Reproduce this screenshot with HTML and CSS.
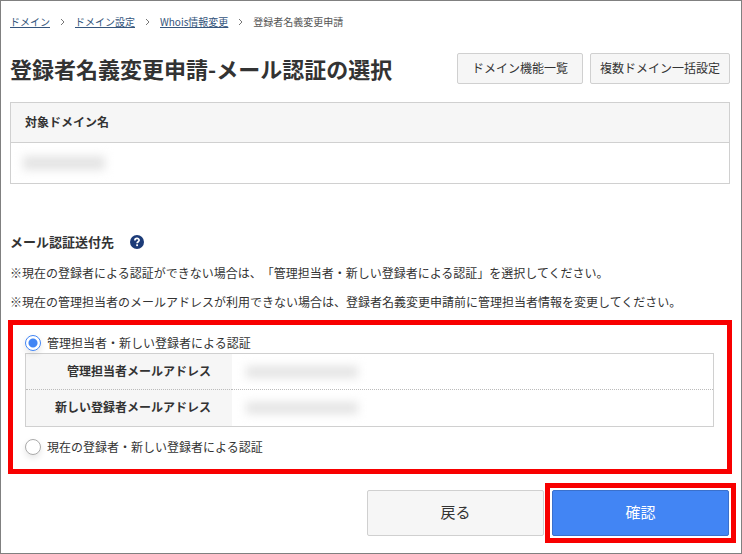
FILE: index.html
```html
<!DOCTYPE html>
<html lang="ja">
<head>
  <meta charset="UTF-8">
  <meta name="viewport" content="width=device-width, initial-scale=1.0">
  <title>登録者名義変更申請</title>
  <link rel="stylesheet" href="styles.css">
</head>
<body>
<div class="container">
  <nav class="breadcrumb">
    <a href="#">ドメイン</a>
    <svg class="chevron" viewBox="0 0 5 8"><path d="M1 1 L4 4 L1 7"/></svg>
    <a href="#">ドメイン設定</a>
    <svg class="chevron" viewBox="0 0 5 8"><path d="M1 1 L4 4 L1 7"/></svg>
    <a href="#">Whois情報変更</a>
    <svg class="chevron" viewBox="0 0 5 8"><path d="M1 1 L4 4 L1 7"/></svg>
    <span>登録者名義変更申請</span>
  </nav>

  <div class="header">
    <h1>登録者名義変更申請-メール認証の選択</h1>
    <div class="header-links">
      <button type="button" class="small-button">ドメイン機能一覧</button>
      <button type="button" class="small-button">複数ドメイン一括設定</button>
    </div>
  </div>

  <table class="domain-table">
    <thead>
      <tr><th>対象ドメイン名</th></tr>
    </thead>
    <tbody>
      <tr><td><span class="masked"></span></td></tr>
    </tbody>
  </table>

  <form action="#" method="post">
    <h2>
      メール認証送付先
      <svg class="help-icon" viewBox="0 0 14 14">
        <circle cx="7" cy="7" r="7" fill="#1c3b78"/>
        <path d="M4.9 5.4 C4.9 2.8 9.1 2.8 9.1 5.3 C9.1 6.8 7.1 6.7 7.1 8.3" fill="none" stroke="#fff" stroke-width="1.7"/>
        <rect x="6.2" y="9.3" width="1.8" height="1.8" fill="#fff"/>
      </svg>
    </h2>
    <p class="note">※現在の登録者による認証ができない場合は、「管理担当者・新しい登録者による認証」を選択してください。</p>
    <p class="note">※現在の管理担当者のメールアドレスが利用できない場合は、登録者名義変更申請前に管理担当者情報を変更してください。</p>

    <div class="auth-options">
      <label class="radio-label">
        <input type="radio" name="auth" value="admin" checked>
        管理担当者・新しい登録者による認証
      </label>
      <table class="mail-table">
        <tr>
          <th>管理担当者メールアドレス</th>
          <td><span class="masked masked-mail"></span></td>
        </tr>
        <tr>
          <th>新しい登録者メールアドレス</th>
          <td><span class="masked masked-mail"></span></td>
        </tr>
      </table>
      <label class="radio-label">
        <input type="radio" name="auth" value="current">
        現在の登録者・新しい登録者による認証
      </label>
    </div>

    <div class="actions">
      <button type="button" class="action-button">戻る</button>
      <div class="confirm-frame">
        <button type="submit" class="action-button primary">確認</button>
      </div>
    </div>
  </form>
</div>
</body>
</html>
```

FILE: styles.css
```css
:root {
  --primary-color: #4285f4;
  --highlight-color: #f80000;
  --light-gray: #f6f6f6;
  --border-color: #d0d0d0;
  --text-color: #333;
}

* {
  box-sizing: border-box;
}

body {
  margin: 0;
  font-family: "Noto Sans CJK JP", sans-serif;
  font-size: 12px;
  line-height: 20px;
  color: var(--text-color);
  background: white;
  text-spacing-trim: space-all;
}

.container {
  min-height: 100vh;
  padding: 11px 11px 10px 9px;
  border: 1px solid #808080;
}

.breadcrumb {
  display: flex;
  align-items: center;
  gap: 10px;
  font-size: 10px;
  color: #555;
}

.breadcrumb a {
  color: #35557c;
  text-decoration: underline;
}

.chevron {
  width: 5px;
  height: 8px;
  fill: none;
  stroke: #777;
  stroke-width: 1;
}

.header {
  display: flex;
  justify-content: space-between;
  align-items: center;
  margin: 21px 0 18px;
}

h1 {
  margin: 0;
  font-size: 22px;
  line-height: 31px;
}

.header-links {
  display: flex;
  gap: 7px;
}

button {
  font-family: inherit;
  color: var(--text-color);
  background: var(--light-gray);
  border: 1px solid var(--border-color);
  border-radius: 2px;
  cursor: pointer;
}

.small-button {
  min-width: 126px;
  height: 31px;
  padding: 0 9px 2px;
  font-size: 12px;
}

table {
  width: 100%;
  border: 1px solid var(--border-color);
  border-spacing: 0;
}

th,
td {
  padding: 0 14px;
}

.domain-table th {
  height: 40px;
  padding-bottom: 2px;
  text-align: left;
  background: var(--light-gray);
  border-bottom: 1px solid var(--border-color);
}

.domain-table td {
  height: 40px;
  padding-left: 12px;
}

/* blurred-out private values */
.masked {
  display: block;
  width: 82px;
  height: 14px;
  background: #e4e4e4;
  filter: blur(5px);
}

.masked-mail {
  width: 112px;
  height: 12px;
}

h2 {
  display: flex;
  align-items: center;
  gap: 16px;
  margin: 48px 0 6px;
  font-size: 13px;
  line-height: 20px;
}

.help-icon {
  width: 14px;
  height: 14px;
}

.note {
  margin: 0;
  line-height: 29px;
}

.auth-options {
  margin: 4px -2px 9px;
  padding: 8px 13px 12px 12px;
  border: 5px solid var(--highlight-color);
}

.radio-label {
  display: flex;
  align-items: center;
  gap: 6px;
}

input[type="radio"] {
  appearance: none;
  width: 16px;
  height: 16px;
  margin: 0;
  background: white;
  border: 1px solid #aaa;
  border-radius: 50%;
  box-shadow: 0 3px 6px rgba(0,0,0,0.1);
}

input[type="radio"]:checked {
  background: radial-gradient(circle, var(--primary-color) 0 4px, white 5px);
  border-color: var(--primary-color);
}

.mail-table {
  margin-bottom: 10px;
}

.mail-table th {
  width: 30%;
  height: 36px;
  padding: 0 21px 2px 14px;
  text-align: right;
  background: var(--light-gray);
}

.mail-table tr:first-child th,
.mail-table tr:first-child td {
  border-bottom: 1px dotted #bbb;
}

.actions {
  display: flex;
  justify-content: flex-end;
  align-items: center;
  gap: 1px;
  margin-right: -6px;
}

.action-button {
  width: 177px;
  height: 46px;
  padding-bottom: 4px;
  font-size: 15px;
}

.confirm-frame {
  padding: 2px;
  border: 5px solid var(--highlight-color);
}

.confirm-frame .action-button {
  display: block;
}

.primary {
  color: white;
  background: var(--primary-color);
  border-color: #3a70cc;
}
```
